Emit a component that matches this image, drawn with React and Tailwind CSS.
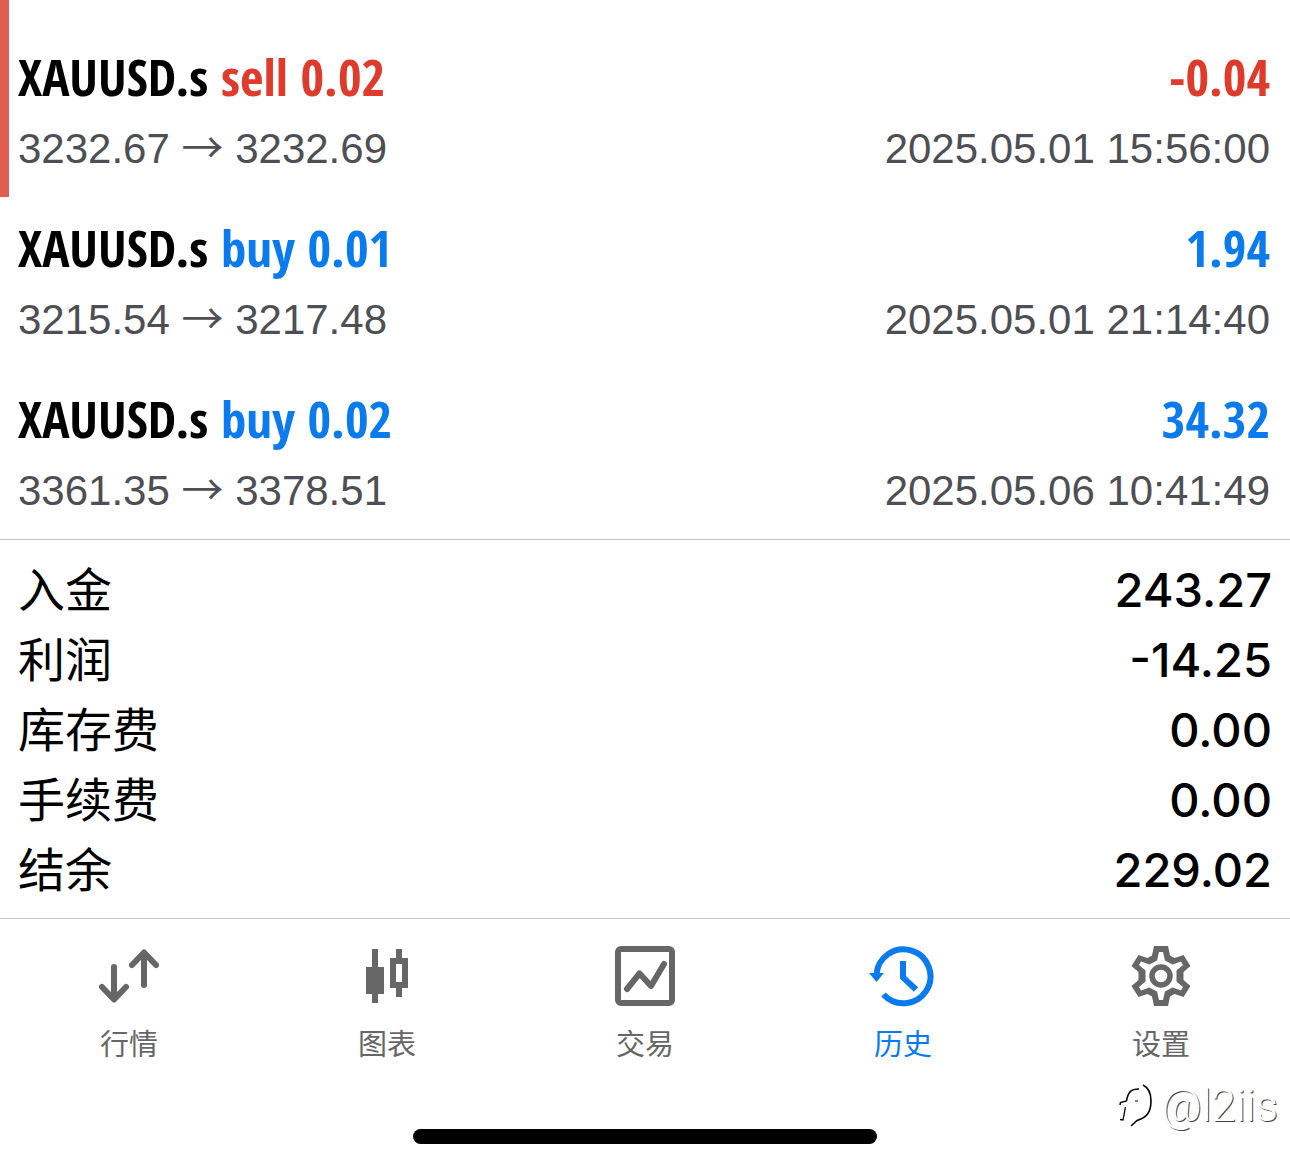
const trades = [
  { symbol: 'XAUUSD.s', side: 'sell', volume: '0.02', open: '3232.67', close: '3232.69', profit: '-0.04', time: '2025.05.01 15:56:00', marked: true },
  { symbol: 'XAUUSD.s', side: 'buy', volume: '0.01', open: '3215.54', close: '3217.48', profit: '1.94', time: '2025.05.01 21:14:40' },
  { symbol: 'XAUUSD.s', side: 'buy', volume: '0.02', open: '3361.35', close: '3378.51', profit: '34.32', time: '2025.05.06 10:41:49' },
];

const summary = [
  ['入金', '243.27'],
  ['利润', '-14.25'],
  ['库存费', '0.00'],
  ['手续费', '0.00'],
  ['结余', '229.02'],
];

function QuotesIcon() {
  return (
    <svg viewBox="0 0 64 64" className="size-16" fill="none" stroke="currentColor" strokeWidth="6" strokeLinecap="round" strokeLinejoin="round" aria-hidden="true">
      <path d="M17 23V55M5 43L17 55.500L29 43" />
      <path d="M47 41V9M35 21L47 8.500L59 21" />
    </svg>
  );
}

function ChartIcon() {
  return (
    <svg viewBox="0 0 64 64" className="size-16" fill="currentColor" aria-hidden="true">
      <path d="M17 5h6v18h6v27h-6v9h-6v-9h-6V23h6z" />
      <path fillRule="evenodd" d="M41 5h6v9h6v30h-6v9h-6v-9h-6V14h6zM41 20v18h6V20z" />
    </svg>
  );
}

function TradeIcon() {
  return (
    <svg viewBox="0 0 64 64" className="size-16" fill="none" stroke="currentColor" strokeWidth="6" strokeLinejoin="round" aria-hidden="true">
      <rect x="5" y="5" width="54" height="54" rx="3" />
      <path d="M14 45L26.500 29.500L38 42L51 20" strokeLinecap="round" />
    </svg>
  );
}

function HistoryIcon() {
  return (
    <svg viewBox="0 0 68 64" className="h-16 w-17" fill="none" stroke="currentColor" strokeWidth="6" aria-hidden="true">
      <path d="M7.500 31A27 27 0 1 1 14.500 50.500" />
      <path d="M34 17V33.500L47 45.500" />
      <path d="M0 29H15L7.500 38Z" fill="currentColor" stroke="none" />
    </svg>
  );
}

function SettingsIcon() {
  return (
    <svg viewBox="0 0 64 64" className="size-16" fill="currentColor" aria-hidden="true">
      <path
        fillRule="evenodd"
        d="M25 2H39L41 11.500L45.500 14L54.500 11L61.500 22L54.500 28V36L61.500 42L54.500 53L45.500 50L41 52.500L39 62H25L23 52.500L18.500 50L9.500 53L2.500 42L9.500 36V28L2.500 22L9.500 11L18.500 14L23 11.500Z
        M30 8L28 16.500L20.500 20.500L12 17.500L10 21L16.500 26.500V37.500L10 43L12 46.500L20.500 43.500L28 47.500L30 56H34L36 47.500L43.500 43.500L52 46.500L54 43L47.500 37.500V26.500L54 21L52 17.500L43.500 20.500L36 16.500L34 8Z"
      />
      <circle cx="32" cy="32" r="9" fill="none" stroke="currentColor" strokeWidth="5.500" />
    </svg>
  );
}

const tabs = [
  { label: '行情', Icon: QuotesIcon },
  { label: '图表', Icon: ChartIcon },
  { label: '交易', Icon: TradeIcon },
  { label: '历史', Icon: HistoryIcon, active: true },
  { label: '设置', Icon: SettingsIcon },
];

function Trade({ trade }) {
  const tone = trade.side === 'sell' ? 'text-[#df3b2c]' : 'text-[#0a7aef]';
  return (
    <li className={trade.marked ? 'border-l-9 border-[#e05d50] pt-[41px] pr-5 pb-[13px] pl-[9px]' : 'pt-[15px] pr-5 pb-[13px] pl-[18px]'}>
      <div className="mb-0.5 flex items-center justify-between font-['Open_Sans_Condensed','Open_Sans',sans-serif] text-[51px] leading-[71px] font-bold">
        <h2>
          {trade.symbol} <span className={tone}>{trade.side} {trade.volume}</span>
        </h2>
        <span className={tone}>{trade.profit}</span>
      </div>
      <div className="flex items-center justify-between font-['Liberation_Sans','Noto_Sans_CJK_SC',sans-serif] text-[42px] leading-[70px] text-[#4e4f54]">
        <span>
          {trade.open} <span className="font-['Noto_Sans_CJK_SC',sans-serif] leading-none">→</span> {trade.close}
        </span>
        <time>{trade.time}</time>
      </div>
    </li>
  );
}

export default function App() {
  return (
    <div className="flex min-h-screen flex-col bg-white text-black">
      <main>
        <ul>
          {trades.map((trade) => (
            <Trade key={trade.time} trade={trade} />
          ))}
        </ul>
        <dl className="border-y border-[#c6c6c8] pt-[15px] pr-[18px] pb-[13px] pl-[18px]">
          {summary.map(([label, value]) => (
            <div key={label} className="flex justify-between">
              <dt className="font-['Noto_Sans_CJK_SC',sans-serif] text-[47px] leading-[64px]">{label}</dt>
              <dd className="font-['Inter',sans-serif] text-[47px] leading-[70px] font-medium">{value}</dd>
            </div>
          ))}
        </dl>
      </main>
      <nav className="grid grid-cols-5 pt-[25px]">
        {tabs.map(({ label, Icon, active }) => (
          <button
            key={label}
            type="button"
            aria-current={active ? 'page' : undefined}
            className={`flex flex-col items-center gap-3.5 font-['Noto_Sans_CJK_SC',sans-serif] text-[29px] leading-[40px] ${active ? 'text-[#0a7aef]' : 'text-[#666666]'}`}
          >
            <Icon />
            {label}
          </button>
        ))}
      </nav>
      <footer className="relative flex flex-1 items-end justify-center pb-6">
        <div className="h-[15px] w-[36%] rounded-full bg-black" />
        <div className="absolute top-5 right-3 flex items-center gap-1 text-white">
          <svg viewBox="0 0 40 48" className="h-12 w-10" fill="none" stroke="#000" aria-hidden="true">
            <path d="M22 7C14 7 11 10 9.500 19L3.500 20.500L3 23" strokeWidth="1.500" />
            <path d="M8.500 25L6 38L3 37.500" strokeWidth="1.300" />
            <path d="M26 3C32 6 34 12 34 19C34 31 29 36 20 38.500L14 44" strokeWidth="1.600" />
            <path d="M18 19h3" strokeWidth="1" />
          </svg>
          <span className="font-['Roboto',sans-serif] text-[44px] leading-[48px] font-light [text-shadow:1px_1px_0_#444]">@l2iis</span>
        </div>
      </footer>
    </div>
  );
}
